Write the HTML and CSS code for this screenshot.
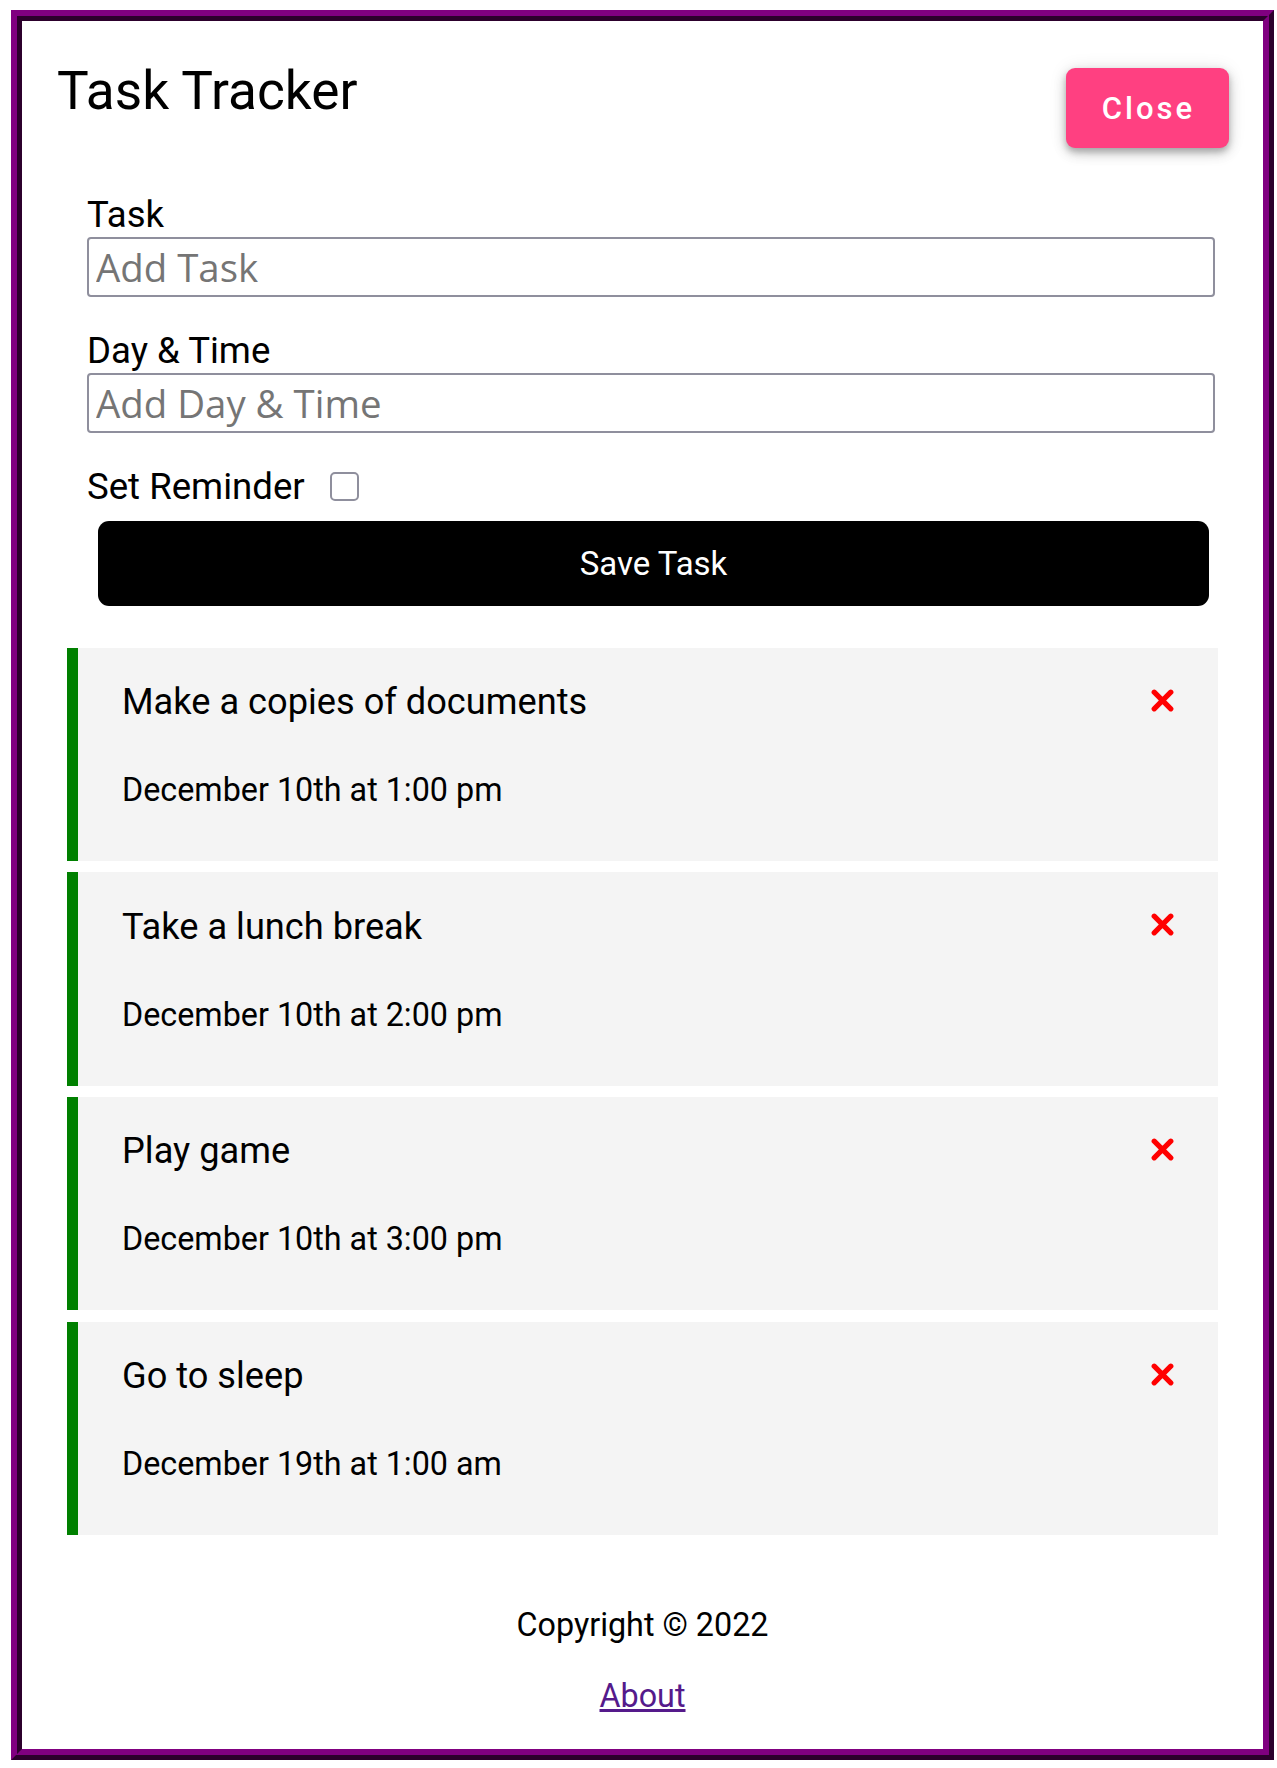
FILE: index.html
```html
<!DOCTYPE html>
<html lang="en">
<head>
<meta charset="utf-8">
<title>Task Tracker</title>
<link rel="stylesheet" href="styles.css">
</head>
<body>
<div class="container">
  <header class="header">
    <h1 class="title">Task Tracker</h1>
    <button class="btn-close" type="button">Close</button>
  </header>

  <form class="add-form">
    <div class="form-control">
      <label class="label">Task</label>
      <input class="text-input" type="text" placeholder="Add Task">
    </div>
    <div class="form-control">
      <label class="label">Day &amp; Time</label>
      <input class="text-input" type="text" placeholder="Add Day &amp; Time">
    </div>
    <div class="form-check">
      <label class="label">Set Reminder</label>
      <input class="checkbox" type="checkbox">
    </div>
    <button class="btn-save" type="button">Save Task</button>
  </form>

  <div class="tasks">
    <div class="task">
      <h3 class="task-title">Make a copies of documents
        <svg class="icon-x" viewBox="0 0 23 23" aria-hidden="true"><path d="M3.2 3.2L19.8 19.8M19.8 3.2L3.2 19.8"/></svg>
      </h3>
      <p class="task-date">December 10th at 1:00 pm</p>
    </div>
    <div class="task">
      <h3 class="task-title">Take a lunch break
        <svg class="icon-x" viewBox="0 0 23 23" aria-hidden="true"><path d="M3.2 3.2L19.8 19.8M19.8 3.2L3.2 19.8"/></svg>
      </h3>
      <p class="task-date">December 10th at 2:00 pm</p>
    </div>
    <div class="task">
      <h3 class="task-title">Play game
        <svg class="icon-x" viewBox="0 0 23 23" aria-hidden="true"><path d="M3.2 3.2L19.8 19.8M19.8 3.2L3.2 19.8"/></svg>
      </h3>
      <p class="task-date">December 10th at 3:00 pm</p>
    </div>
    <div class="task">
      <h3 class="task-title">Go to sleep
        <svg class="icon-x" viewBox="0 0 23 23" aria-hidden="true"><path d="M3.2 3.2L19.8 19.8M19.8 3.2L3.2 19.8"/></svg>
      </h3>
      <p class="task-date">December 19th at 1:00 am</p>
    </div>
  </div>

  <footer class="footer">
    <p class="copyright">Copyright &copy; 2022</p>
    <a class="about" href="#about">About</a>
  </footer>
</div>
</body>
</html>
```

FILE: styles.css
```css
* { box-sizing: border-box; }

html, body {
  margin: 0;
  padding: 0;
  background: #fff;
}

body {
  font-family: Roboto, "Liberation Sans", Arial, sans-serif;
  color: #000;
}

.container {
  width: 1263px;
  margin: 10px 0 0 11px;
  border: 11px ridge #800080;
  padding: 34px 34px 34px 34px;
  display: flex;
  flex-direction: column;
}

.header {
  display: flex;
  justify-content: space-between;
  align-items: flex-start;
}

.title {
  margin: 5px 0 0 1px;
  font-size: 53.2px;
  font-weight: 400;
  line-height: 62px;
}

.btn-close {
  margin-top: 13px;
  width: 163px;
  height: 80px;
  border: none;
  border-radius: 9px;
  background: #ff4081;
  color: #fff;
  font-family: Roboto, sans-serif;
  font-size: 31px;
  font-weight: 500;
  letter-spacing: 3px;
  padding: 0 0 0 2px;
  box-shadow: 0 4px 6px rgba(0,0,0,0.22), 0 6px 14px rgba(0,0,0,0.14), 0 1px 18px rgba(0,0,0,0.1);
}

.add-form {
  margin: 46px 14px 0 31px;
  display: flex;
  flex-direction: column;
}

.form-control {
  display: flex;
  flex-direction: column;
  margin-bottom: 33.4px;
}

.label {
  display: block;
  font-size: 36.6px;
  line-height: 41.25px;
}

.text-input {
  margin-top: 1.4px;
  width: 100%;
  height: 60px;
  border: 2px solid #8f8f9d;
  border-radius: 4px;
  padding: 1px 7px 0 7px;
  font-family: "Open Sans", "DejaVu Sans", sans-serif;
  font-size: 38.4px;
  color: #000;
  background: #fff;
  outline: none;
}

.text-input::placeholder {
  color: #757575;
  opacity: 1;
}

.form-check {
  display: flex;
  align-items: center;
}

.form-check .label {
  flex: none;
}

.checkbox {
  -webkit-appearance: none;
  appearance: none;
  margin: 0 0 0 25px;
  width: 29px;
  height: 29px;
  border: 2.5px solid #8f8f9d;
  border-radius: 5px;
  background: #fff;
}

.btn-save {
  display: block;
  margin: 13.4px 6px 0 11px;
  height: 85px;
  border: none;
  border-radius: 11px;
  background: #000;
  color: #fff;
  font-family: Roboto, sans-serif;
  font-size: 33px;
  font-weight: 400;
}

.tasks {
  margin: 42px 11px 0 11px;
  display: flex;
  flex-direction: column;
  gap: 11.4px;
}

.task {
  background: #f4f4f4;
  border-left: 11px solid #008000;
  padding: 22px 44px 22px 44px;
  height: 213.3px;
}

.task-title {
  margin: 11.4px 0 0 0;
  font-size: 36.2px;
  font-weight: 400;
  line-height: 41.25px;
  display: flex;
  justify-content: space-between;
  align-items: center;
}

.icon-x {
  width: 23px;
  height: 23px;
  fill: none;
  stroke: #ff0000;
  stroke-width: 5.2;
  stroke-linecap: round;
  margin-top: -3px;
  flex: none;
}

.task-date {
  margin: 49.5px 0 0 0;
  font-size: 32.3px;
  line-height: 37px;
}

.footer {
  margin-top: 72px;
  display: flex;
  flex-direction: column;
  align-items: center;
}

.copyright {
  margin: 0;
  font-size: 32.3px;
  line-height: 37px;
}

.about {
  margin-top: 34px;
  font-size: 32.3px;
  line-height: 37px;
  color: #551a8b;
  text-decoration: underline;
}
```
